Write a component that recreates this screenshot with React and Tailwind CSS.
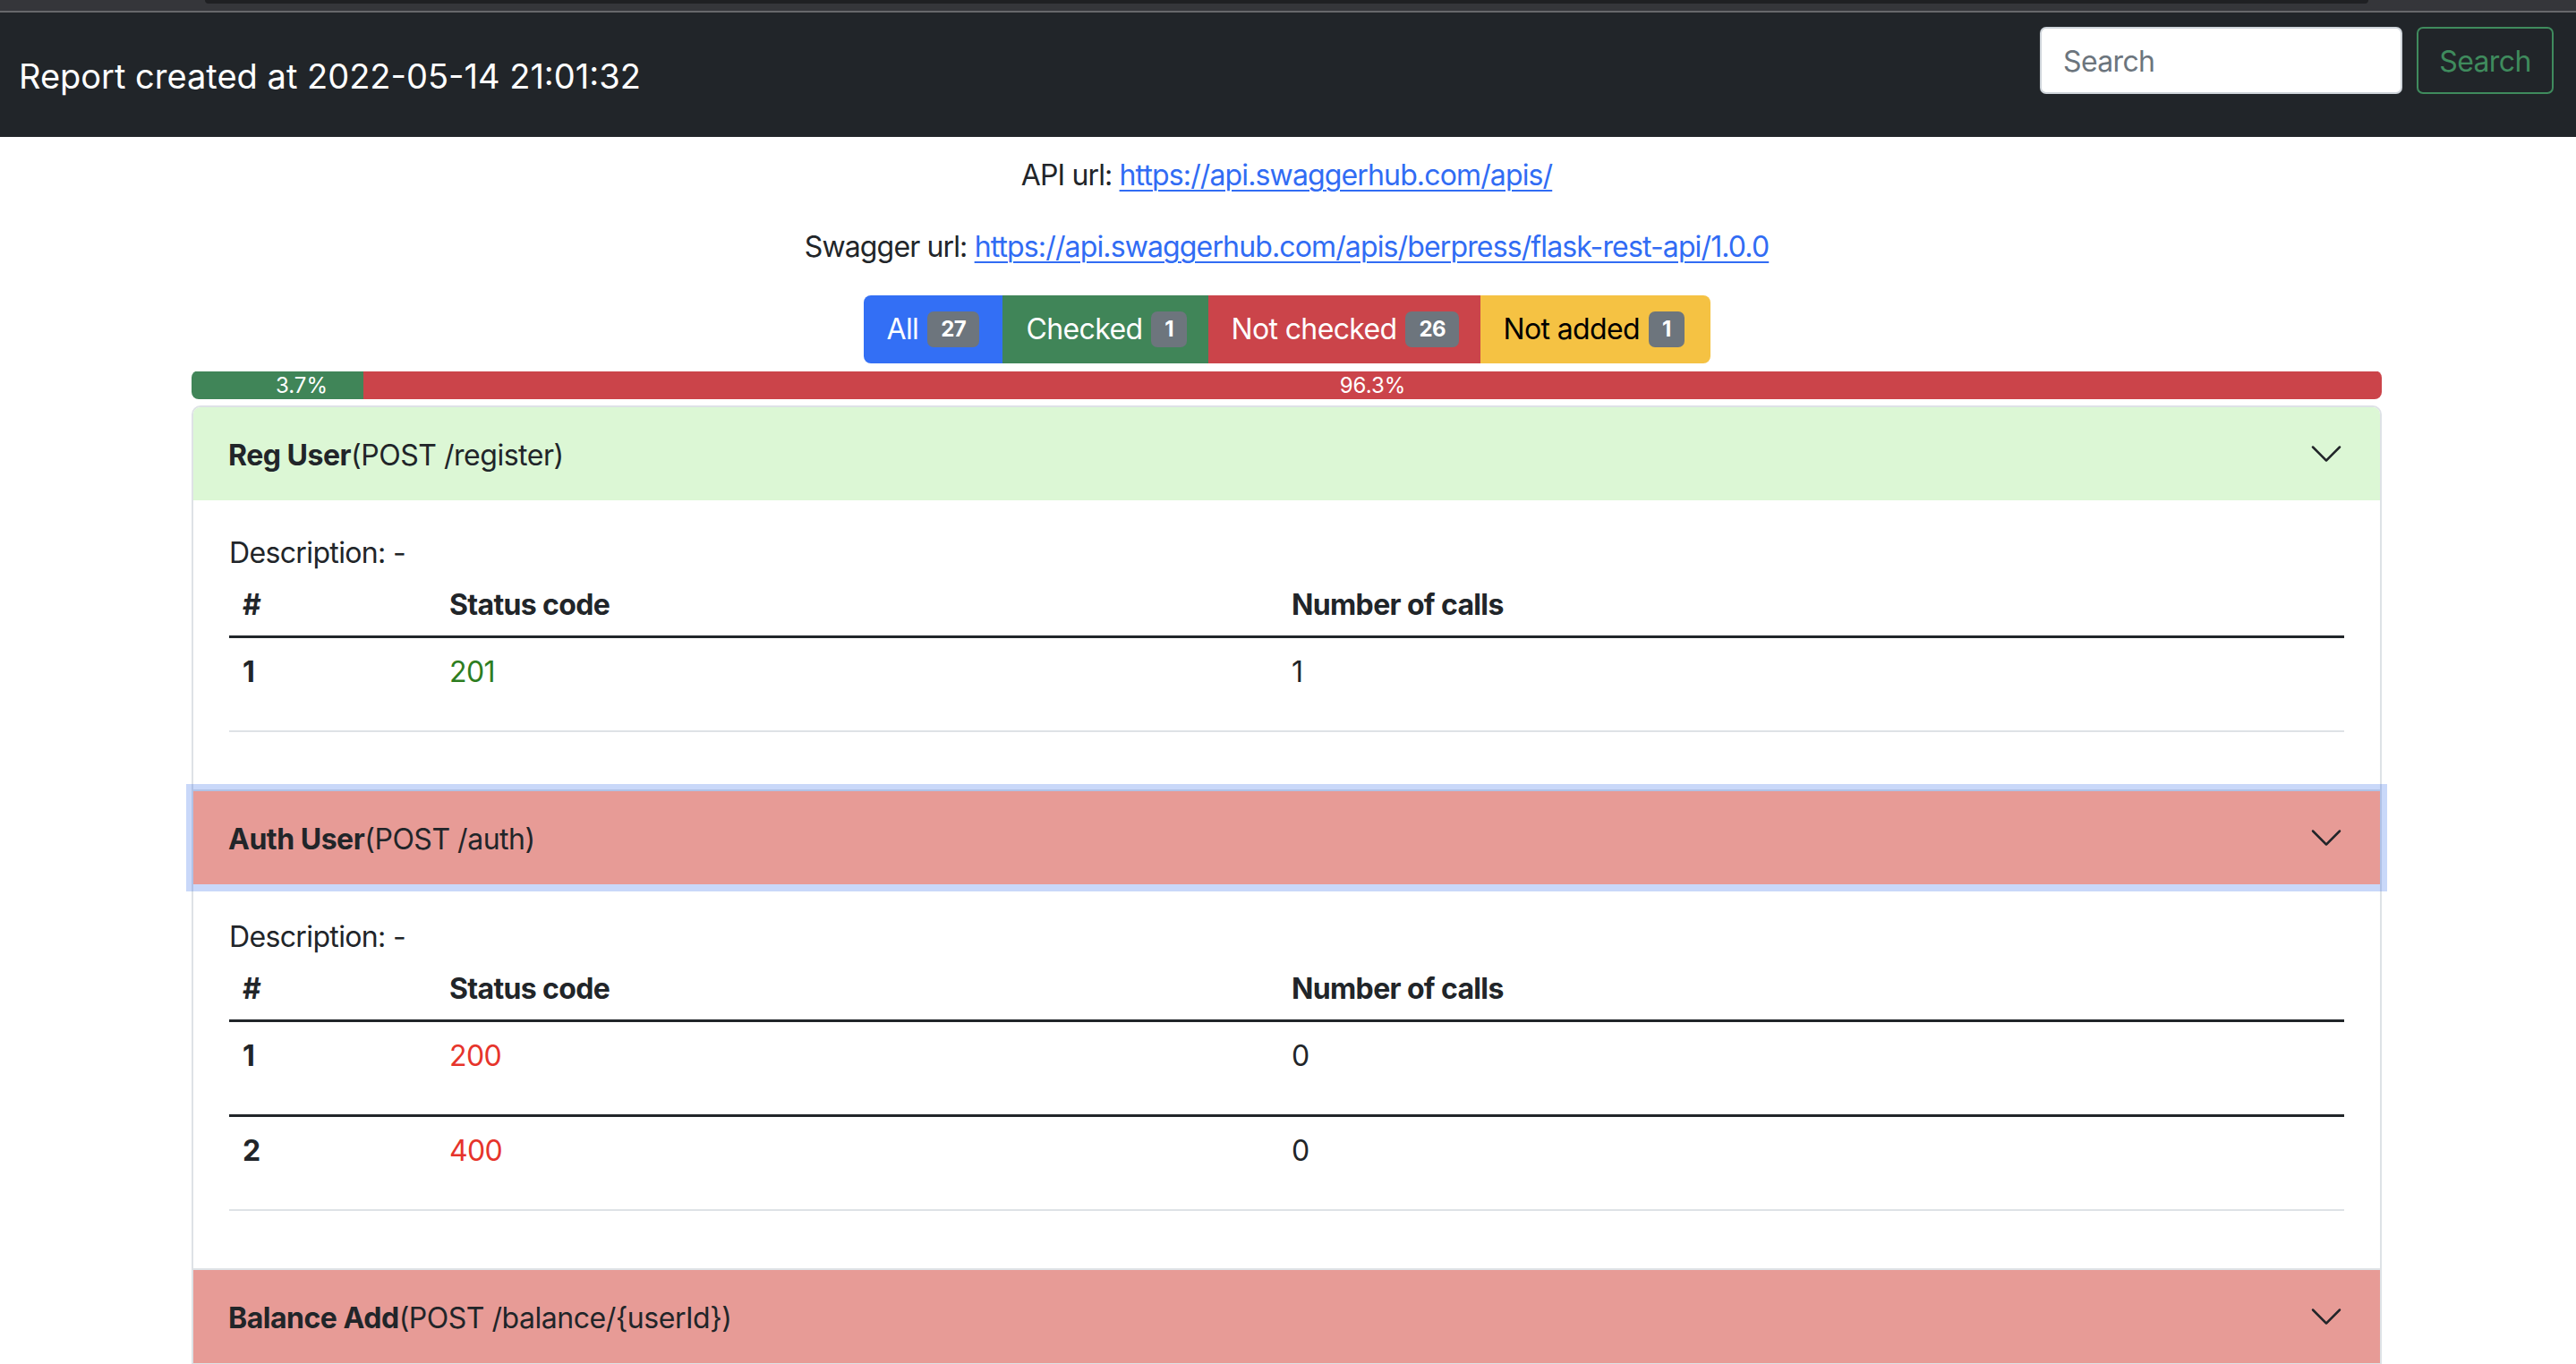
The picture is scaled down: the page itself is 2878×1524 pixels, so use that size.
import React from "react";

const FONT = "font-['Inter','Liberation_Sans',sans-serif]";

function Chevron() {
  return (
    <svg width="40" height="40" viewBox="0 0 16 16" fill="#212529">
      <path
        fillRule="evenodd"
        d="M1.646 4.646a.5.5 0 0 1 .708 0L8 10.293l5.646-5.647a.5.5 0 0 1 .708.708l-6 6a.5.5 0 0 1-.708 0l-6-6a.5.5 0 0 1 0-.708z"
      />
    </svg>
  );
}

function Badge({ children }) {
  return (
    <span className="ml-[10px] inline-flex h-[40px] items-center rounded-[7px] bg-[#6d757d] px-[15px] text-[24px] font-bold leading-none text-white">
      {children}
    </span>
  );
}

function StatusTable({ rows }) {
  return (
    <div className="mb-[32px] text-[32px] leading-[48px] tracking-[-0.02em]">
      <div className="grid h-[74px] grid-cols-[231px_941px_1fr] border-b-[3px] border-[#212529] pt-[13px] font-bold">
        <div className="pl-[15px]">#</div>
        <div className="pl-[15px]">Status code</div>
        <div className="pl-[15px]">Number of calls</div>
      </div>
      {rows.map((r, i) => {
        const last = i === rows.length - 1;
        return (
          <div
            key={i}
            className={
              last
                ? "grid h-[105px] grid-cols-[231px_941px_1fr] border-b-[2px] border-[#dee2e6] pt-[14px]"
                : "grid h-[106px] grid-cols-[231px_941px_1fr] border-b-[3px] border-[#212529] pt-[14px]"
            }
          >
            <div className="pl-[15px] font-bold">{i + 1}</div>
            <div className={r.ok ? "pl-[15px] text-[#2d7d20]" : "pl-[15px] text-[#e6342b]"}>{r.code}</div>
            <div className="pl-[15px]">{r.calls}</div>
          </div>
        );
      })}
    </div>
  );
}

function AccordionItem({ first, title, sub, color, focused, rows, open = true }) {
  const itemCls = first
    ? "relative border-[2px] border-[#dee2e6] rounded-t-[10px] bg-white"
    : "relative border-x-[2px] border-b-[2px] border-[#dee2e6] bg-white";
  const headCls =
    "relative flex h-[104px] items-center justify-between pl-[39px] pr-[40px] text-[32px] leading-[48px] tracking-[-0.015em] " +
    (color === "green" ? "bg-[#dcf7d5] " : "bg-[#e79b96] ") +
    (first ? "rounded-t-[8px] " : "") +
    (focused ? "z-10 shadow-[0_0_0_8px_rgba(40,100,230,0.25)]" : "");
  return (
    <div className={itemCls}>
      <div className={headCls}>
        <div className="pt-[4px]">
          <span className="font-bold">{title}</span>
          <span>{sub}</span>
        </div>
        <Chevron />
      </div>
      {open && (
        <div className="px-[40px] pt-[32px] pb-[32px]">
          <div className="h-[48px] pt-[3px] text-[32px] leading-[48px] tracking-[-0.02em]">Description: -</div>
          <StatusTable rows={rows} />
        </div>
      )}
    </div>
  );
}

export default function App() {
  return (
    <div className={"min-h-screen bg-white text-[#212529] " + FONT}>
      {/* browser strip */}
      <div className="flex h-[12px] bg-[#35363a] pl-[229px] pr-[232px]">
        <div className="h-[4px] w-full rounded-b-[6px] bg-[#1f2023]" />
      </div>
      <div className="h-[2px] bg-[#67686b]" />

      {/* navbar */}
      <nav className="flex h-[139px] justify-between bg-[#212529]">
        <div className="flex items-center pl-[21px] pt-[4px] text-[38px] text-white">
          Report created at 2022-05-14 21:01:32
        </div>
        <div className="flex gap-[16px] pr-[25px] pt-[16px]">
          <input
            placeholder="Search"
            className="h-[75px] w-[405px] rounded-[7px] border-[2px] border-[#ced4da] bg-white pl-[24px] pt-[2px] text-[32px] tracking-[-0.02em] text-[#212529] outline-none placeholder:text-[#6c757d]"
          />
          <button className="h-[75px] w-[153px] rounded-[7px] border-[2px] border-[#3f8b5d] pt-[2px] text-[32px] tracking-[-0.02em] text-[#3f8b5d]">
            Search
          </button>
        </div>
      </nav>

      <main className="ml-[214px] w-[2447px]">
        <div className="mt-[17px] text-center text-[32px] leading-[48px] tracking-[-0.027em]">
          <p className="mb-[32px] h-[48px] pt-[2px]">
            API url:{" "}
            <a href="#" className="text-[#316cf4] underline underline-offset-[5px] decoration-[2px]">
              https://api.swaggerhub.com/apis/
            </a>
          </p>
          <p className="mb-[32px] h-[48px] pt-[2px]">
            Swagger url:{" "}
            <a href="#" className="text-[#316cf4] underline underline-offset-[5px] decoration-[2px]">
              https://api.swaggerhub.com/apis/berpress/flask-rest-api/1.0.0
            </a>
          </p>
        </div>

        {/* filter tabs */}
        <div className="flex justify-center">
          <div className="flex h-[76px] overflow-hidden rounded-[8px] text-[32px] tracking-[-0.02em]">
            <div className="flex w-[155px] items-center bg-[#336ff5] pl-[26px] text-white">
              All<Badge>27</Badge>
            </div>
            <div className="flex w-[230px] items-center bg-[#408558] pl-[27px] text-white">
              Checked<Badge>1</Badge>
            </div>
            <div className="flex w-[304px] items-center bg-[#cb444a] pl-[26px] text-white">
              Not checked<Badge>26</Badge>
            </div>
            <div className="flex w-[257px] items-center bg-[#f5c243] pl-[26px] text-black">
              Not added<Badge>1</Badge>
            </div>
          </div>
        </div>

        {/* progress */}
        <div className="mt-[8px] flex h-[32px] overflow-hidden rounded-[8px] pt-[1px] text-[24px] leading-[32px] text-white">
          <div className="flex w-[192px] justify-center bg-[#408558] pl-[54px]">3.7%</div>
          <div className="flex flex-1 justify-center bg-[#cb444a]">96.3%</div>
        </div>

        {/* accordion */}
        <div className="mt-[7px]">
          <AccordionItem
            first
            title="Reg User"
            sub="(POST /register)"
            color="green"
            rows={[{ code: "201", calls: "1", ok: true }]}
          />
          <AccordionItem
            focused
            title="Auth User"
            sub="(POST /auth)"
            color="red"
            rows={[
              { code: "200", calls: "0", ok: false },
              { code: "400", calls: "0", ok: false },
            ]}
          />
          <AccordionItem
            title="Balance Add"
            sub="(POST /balance/{userId})"
            color="red"
            open={false}
          />
        </div>
      </main>
    </div>
  );
}
